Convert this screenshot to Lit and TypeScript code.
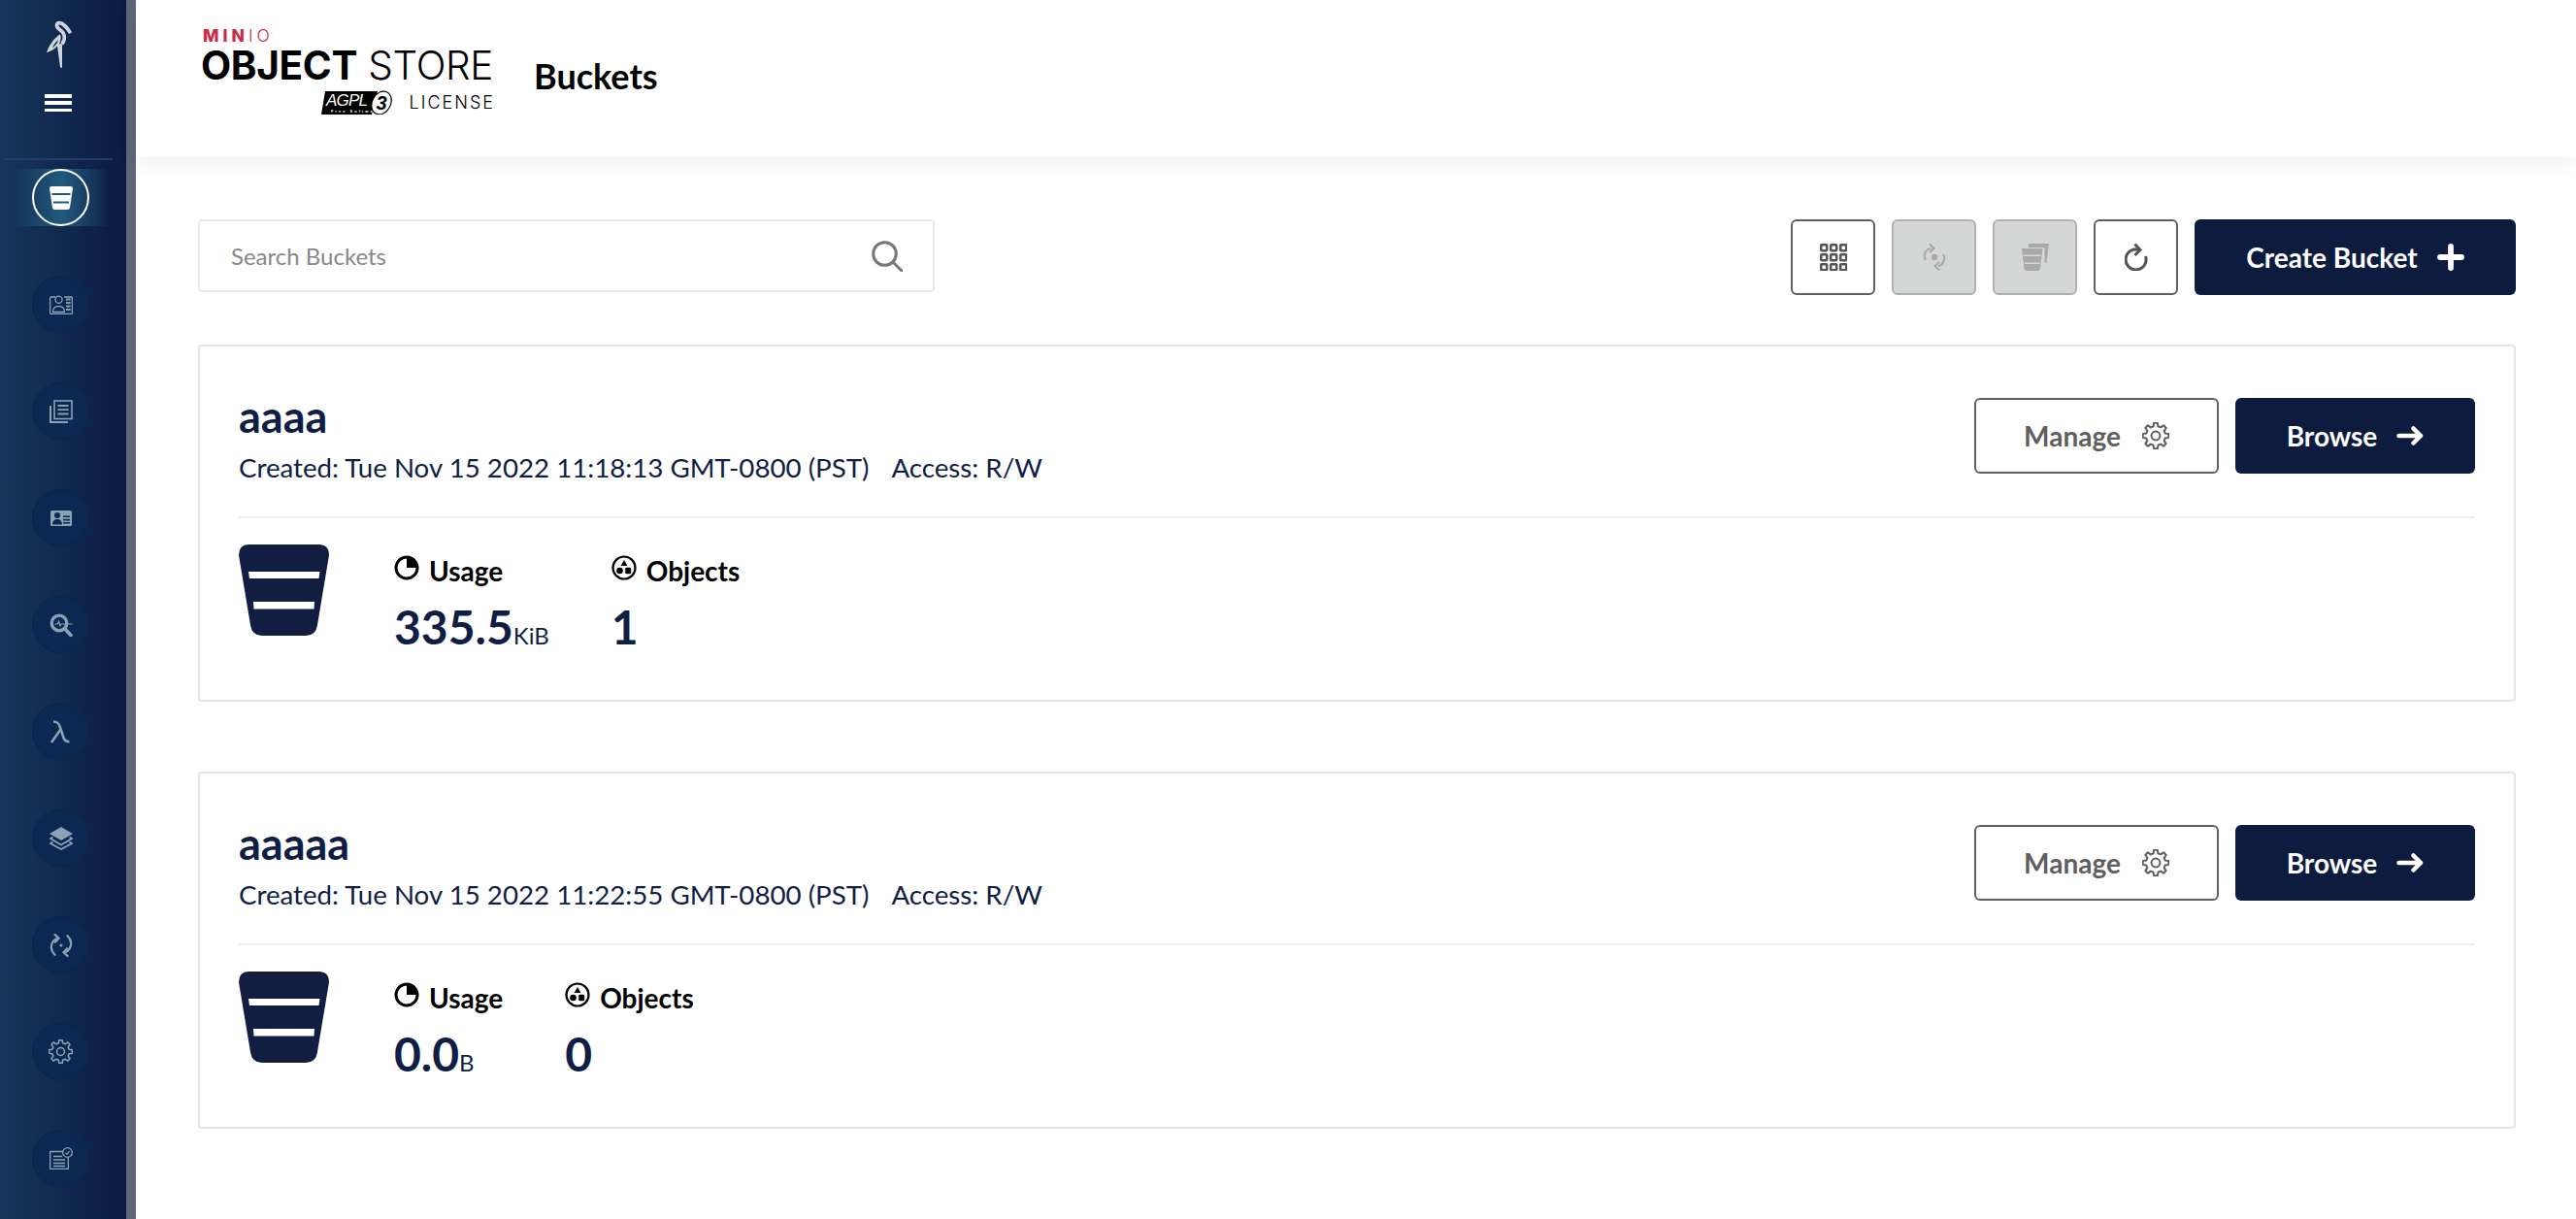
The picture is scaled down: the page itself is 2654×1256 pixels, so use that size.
import { LitElement, html, css, svg } from "lit";
import { customElement } from "lit/decorators.js";

const gearD = (() => {
  const teeth = 8, R = 11.5, r = 8.6, cx = 12, cy = 12;
  let d = "";
  for (let i = 0; i < teeth; i++) {
    const a = (i / teeth) * Math.PI * 2;
    const w = Math.PI / teeth;
    const pts = [
      [r, a - w * 0.62], [R, a - w * 0.36], [R, a + w * 0.36], [r, a + w * 0.62],
    ];
    for (const [rad, t] of pts) {
      d += `${d ? "L" : "M"}${(cx + rad * Math.sin(t)).toFixed(2)} ${(cy - rad * Math.cos(t)).toFixed(2)}`;
    }
  }
  return d + "Z";
})();

const gear = (sw: number) => html`<svg viewBox="0 0 24 24" width="100%" height="100%" fill="none" stroke="currentColor" stroke-width=${sw} stroke-linejoin="round"><path d=${gearD}/><circle cx="12" cy="12" r="3.8"/></svg>`;

const navIcons = [
  html`<svg class="ic" width="24" height="20" viewBox="0 0 24 20" fill="none" stroke="currentColor" stroke-width="1.3"><path d="M6 2H1.6a1 1 0 0 0-1 1v15.4a1 1 0 0 0 1 1h20.8a1 1 0 0 0 1-1V3a1 1 0 0 0-1-1H15"/><circle cx="9.5" cy="4.8" r="3.6"/><path d="M3.5 17.5c0-4 2.6-6 6-6s6 2 6 6z"/><path d="M17 4.5h4.6M17 8h4.6M17 11.5h4.6M17 15h4.6" stroke-width="2"/></svg>`,
  html`<svg class="ic" width="24" height="24" viewBox="0 0 24 24" fill="none" stroke="currentColor" stroke-width="1.6"><rect x="5" y="1" width="18" height="18.5"/><path d="M8.5 6h11M8.5 10.2h11M8.5 14.5h11" stroke-width="1.8"/><path d="M1 6v17h18" stroke-width="2"/></svg>`,
  html`<svg class="ic" width="22" height="16" viewBox="0 0 22 16"><path fill="currentColor" fill-rule="evenodd" d="M1.5 0h19A1.5 1.5 0 0 1 22 1.5v13a1.5 1.5 0 0 1-1.5 1.5h-19A1.5 1.5 0 0 1 0 14.500v-13A1.500 1.500 0 0 1 1.500 0zM7 2a3 3 0 1 0 0 6 3 3 0 0 0 0-6zM2 14.500h10c0-3.500-2-5.500-5-5.500s-5 2-5 5.500zM13 5.500v1.600h7V5.500zM13 8.800v1.600h7V8.800zM13 12v1.600h7V12z"/></svg>`,
  html`<svg class="ic" width="24" height="24" viewBox="0 0 24 24" fill="none" stroke="currentColor"><circle cx="10" cy="10" r="7.800" stroke-width="3.300"/><path d="M15.500 15.500L22 22.500" stroke-width="3.600" stroke-linecap="round"/><path d="M5.500 11h3l1-3 1.500 5 1-2h11.500" stroke-width="1.100"/></svg>`,
  html`<svg class="ic" width="24" height="24" viewBox="0 0 24 24" fill="none" stroke="currentColor" stroke-width="2.600"><path d="M4 1.500c4 0 5.500 1.500 7 6l3.500 10.500c1 3 2.500 4.500 6 4"/><path d="M11.500 9.500L2 23"/></svg>`,
  html`<svg class="ic" width="24" height="24" viewBox="0 0 24 24"><path fill="currentColor" d="M12 0l12 7-12 7L0 7z"/><path fill="none" stroke="currentColor" stroke-width="1.700" d="M3.500 10.500L1 12l11 6.500L23 12l-2.500-1.500"/><path fill="none" stroke="currentColor" stroke-width="1.700" d="M3.500 15.500L1 17l11 6 11-6-2.500-1.500"/></svg>`,
  html`<svg class="ic" width="24" height="24" viewBox="0 0 24 24" fill="none" stroke="currentColor" stroke-width="2.200" stroke-linecap="round"><path d="M9 4.500C2 6.500 -1 15.500 5.500 21.800"/><path d="M15 19.500C22 17.500 25 8.500 18.500 2.200"/><path d="M5.500 1L9.500 4.800 5.800 8.800"/><path d="M18.500 23L14.500 19.200 18.200 15.200"/><circle cx="12" cy="12" r="1.500" fill="currentColor" stroke="none"/></svg>`,
  html`<span class="gear-nav">${gear(1.5)}</span>`,
  html`<svg class="ic" width="24" height="23" viewBox="0 0 24 23" fill="none" stroke="currentColor" stroke-width="1.300"><path d="M14 4.500H.7v18h18.600V11"/><path d="M4 9.500h9M4 13h12M4 16.500h12M4 19.500h12" stroke-width="1.500"/><circle cx="18.500" cy="5.500" r="4.800"/><path d="M16.500 5.700l1.500 1.500 2.600-3" stroke-width="1.100"/></svg>`,
];

const bucketBig = html`<svg class="bucket" width="93" height="94" viewBox="0 0 93 94"><path fill="#111e42" d="M11 0H82Q93 0 93 11L81 83Q79.500 94 69 94H24Q13.500 94 12 83L0 11Q0 0 11 0z"/><path fill="#fff" d="M10 28H83.500L82.500 35H11zM15 59H78L77.500 66.500H15.500z"/></svg>`;

const usageIcon = html`<svg class="si" width="26" height="26" viewBox="0 0 26 26"><circle cx="13" cy="13" r="11" fill="none" stroke="#000" stroke-width="3"/><path d="M13 2a11 11 0 0 1 11 11H13z" fill="#000"/></svg>`;
const objIcon = html`<svg class="si" width="26" height="26" viewBox="0 0 26 26"><circle cx="13" cy="13" r="11.500" fill="none" stroke="#000" stroke-width="2.200"/><path d="M13 5l3.500 6h-7z" fill="#000"/><circle cx="8.500" cy="16" r="3.300" fill="#000"/><rect x="14.200" y="12.800" width="6" height="6.400" rx="1.500" fill="#000"/></svg>`;

const arrow = html`<svg width="28" height="22" viewBox="0 0 28 22" fill="none" stroke="#fff" stroke-width="4.500" stroke-linecap="round" stroke-linejoin="round"><path d="M2.500 11h22.500M17.500 3.500l7.500 7.500-7.500 7.500"/></svg>`;
const plus = html`<svg width="28" height="28" viewBox="0 0 28 28" fill="none" stroke="#fff" stroke-width="5.800" stroke-linecap="round"><path d="M14 3v22M3 14h22"/></svg>`;

const gridIcon = html`<svg width="28" height="28" viewBox="0 0 28 28" fill="none" stroke="#555" stroke-width="2.500">${[0, 10, 20].flatMap((y) => [0, 10, 20].map((x) => svg`<rect x=${x + 1.2} y=${y + 1.2} width="6" height="6" rx=".8"/>`))}</svg>`;
const replIcon = html`<svg width="24" height="28" viewBox="0 0 24 28" fill="none" stroke="#a9a9a9" stroke-width="2.200"><path d="M3 17C0 12 3 6 8 5"/><path d="M7 .5l4.500 4.500L7 9" stroke-width="2.200"/><path d="M21 11c3 5 0 11-5 12"/><path d="M17 27.500L12.500 23l4.500-4"/><circle cx="12" cy="14" r="3.200" fill="#a9a9a9" stroke="none"/></svg>`;
const multiIcon = html`<svg width="28" height="28" viewBox="0 0 28 28"><path fill="#a9a9a9" d="M7 0H28L25.500 20H23.500V4H7z"/><path fill="#a9a9a9" d="M0 5h21.500l-2.500 21Q18.500 28 16.500 28H5q-2 0-2.500-2z"/><path fill="#d5d7d6" d="M1.500 11.500h18.500v1.400H1.500zM3 19.500h15.500v1.400H3z"/></svg>`;
const refreshIcon = html`<svg width="24" height="28" viewBox="0 0 24 28" fill="none" stroke="#555" stroke-width="3"><path d="M15 6.500A10.500 10.500 0 1 0 21.500 13"/><path d="M10.500 .5l5.500 6-5.500 5.500"/></svg>`;
const searchIcon = html`<svg width="32" height="32" viewBox="0 0 32 32" fill="none" stroke="#777" stroke-width="3"><circle cx="13.500" cy="13.500" r="11.800"/><path d="M22 22l9 9" stroke-linecap="round"/></svg>`;

const buckets = [
  { name: "aaaa", created: "Tue Nov 15 2022 11:18:13 GMT-0800 (PST)", usage: "335.5", unit: "KiB", objects: "1" },
  { name: "aaaaa", created: "Tue Nov 15 2022 11:22:55 GMT-0800 (PST)", usage: "0.0", unit: "B", objects: "0" },
];

@customElement("app-root")
export class AppRoot extends LitElement {
  static styles = css`
    :host { display: block; font-family: Lato, "Liberation Sans", sans-serif; }
    * { box-sizing: border-box; }
    .page { display: flex; width: 2654px; height: 1256px; overflow: hidden; background: #fff; }

    .side { width: 140px; flex: none; border-right: 10px solid #5f6678; background: linear-gradient(90deg, #15365a, #0c1a42); display: flex; flex-direction: column; align-items: stretch; padding-top: 22px; }
    .bird { display: block; margin-left: 30px; margin-top: -12px; }
    .burger { width: 28px; height: 18px; margin: 17px 0 0 46px; display: flex; flex-direction: column; justify-content: space-between; }
    .burger i { display: block; height: 3.500px; background: #fff; }
    .rule { height: 2px; margin: 48px 14px 0 4px; background: #1f3f68; }
    .nav { display: flex; flex-direction: column; gap: 51px; padding-top: 9px; }
    .active { height: 59px; margin: 0 17px 0 13px; background: linear-gradient(90deg, transparent, #215a7d 50%, transparent); display: flex; justify-content: center; }
    .active .circle { background: none; border: 2px solid #fff; margin-left: -1px; }
    .circle { width: 59px; height: 59px; border-radius: 50%; background: #0a2851; border: 1px solid #0d2448; display: flex; align-items: center; justify-content: center; color: #8da1b6; }
    .navitem { display: flex; padding-left: 33px; }
    .gear-nav { display: block; width: 25px; height: 25px; }

    .main { flex: 1; min-width: 0; display: flex; flex-direction: column; }
    .top { height: 162px; flex: none; display: flex; align-items: center; background: #fff; box-shadow: 0 4px 22px rgba(0,0,0,.07); position: relative; padding-left: 67px; }
    .logo { width: 303px; align-self: flex-start; display: flex; flex-direction: column; margin-top: 29px; font-family: Inter, sans-serif; color: #000; }
    .minio { color: #c72c48; font-size: 17.500px; line-height: 15px; font-weight: 800; letter-spacing: 4px; margin-left: 2px; }
    .minio b { font-weight: 300; }
    .os { font-size: 40.500px; line-height: 36px; margin-top: 6px; white-space: nowrap; font-weight: 300; letter-spacing: -.350px; }
    .os b { font-weight: 700; }
    .lic { display: flex; align-items: center; justify-content: flex-end; gap: 15px; margin-top: 7px; font-size: 18px; letter-spacing: 2px; font-weight: 300; height: 25px; }
    .title { font-size: 36px; font-weight: 700; color: #000; margin-left: 40px; margin-top: -6px; }

    .content { padding: 64px 62px 0 64px; }
    .bar { display: flex; align-items: flex-start; }
    .search { width: 759px; height: 75px; border: 2px solid #eaeaea; border-radius: 4px; display: flex; align-items: center; justify-content: space-between; padding: 0 31px 0 32px; color: #888; font-size: 24px; }
    .tools { margin-left: auto; display: flex; gap: 17px; }
    .tool { width: 87px; height: 78px; border: 2px solid #5f5f5f; border-radius: 6px; background: #fff; display: flex; align-items: center; justify-content: center; }
    .tool.off { background: #d5d7d6; border-color: #b0b0b0; }
    .btn { height: 78px; border-radius: 6px; display: flex; align-items: center; justify-content: center; font-size: 28px; font-weight: 700; }
    .dark { background: #0d1b3f; color: #fff; }
    .create { width: 331px; gap: 20px; margin-left: 0; }
    .manage { width: 252px; gap: 22px; border: 2px solid #5f5f5f; color: #5f5f5f; background: #fff; }
    .manage span.g { display: block; width: 28px; height: 28px; }
    .browse { width: 247px; gap: 20px; }

    .card { border: 2px solid #e5e5e5; border-radius: 4px; height: 368px; margin-top: 51px; padding: 45px 40px 0 40px; }
    .card + .card { margin-top: 72px; }
    .head { display: flex; justify-content: space-between; align-items: flex-start; height: 132px; padding-bottom: 34px; border-bottom: 2px solid #eee; }
    .acts { display: flex; gap: 17px; margin-top: 8px; }
    .name { font-size: 45px; line-height: 54px; font-weight: 700; color: #101e45; }
    .meta { font-size: 27.700px; line-height: 36px; color: #101e45; margin-top: 8px; display: flex; gap: 23px; white-space: nowrap; }
    .stats { display: flex; padding-top: 27px; }
    .bucket { flex: none; margin-right: 67px; }
    .stat { padding-top: 11px; margin-right: 64px; }
    .lab { display: flex; align-items: center; gap: 10px; font-size: 28px; line-height: 32px; font-weight: 700; color: #000; }
    .si { margin-top: -6px; }
    .val { font-size: 48px; line-height: 56px; font-weight: 700; color: #101e45; margin-top: 14px; white-space: nowrap; }
    .val small { font-size: 24px; font-weight: 400; }
  `;

  private card(b: (typeof buckets)[number]) {
    return html`<section class="card">
      <div class="head">
        <div>
          <div class="name">${b.name}</div>
          <div class="meta"><span>Created: ${b.created}</span><span>Access: R/W</span></div>
        </div>
        <div class="acts">
          <div class="btn manage">Manage <span class="g">${gear(1.7)}</span></div>
          <div class="btn dark browse">Browse ${arrow}</div>
        </div>
      </div>
      <div class="stats">
        ${bucketBig}
        <div class="stat">
          <div class="lab">${usageIcon}Usage</div>
          <div class="val">${b.usage}<small>${b.unit}</small></div>
        </div>
        <div class="stat">
          <div class="lab">${objIcon}Objects</div>
          <div class="val">${b.objects}</div>
        </div>
      </div>
    </section>`;
  }

  render() {
    return html`<div class="page">
      <aside class="side">
        <svg class="bird" width="70" height="70" viewBox="0 0 210 210" fill="none"><path d="M128 72C116 54 106 41 93 41 82 41 83 54 95 62 113 73 112 95 101 106" stroke="#ccd3dc" stroke-width="11"/><path fill="#ccd3dc" d="M54 133C62 108 78 88 96 76 103 96 92 120 54 133zM72 118C80 113 87 106 90 94 81 101 76 109 72 118z" fill-rule="evenodd"/><path fill="#ccd3dc" d="M86 104L96 178 102 180 102 106z"/></svg>
        <div class="burger"><i></i><i></i><i></i></div>
        <div class="rule"></div>
        <nav class="nav">
          <div class="active"><div class="circle">
            <svg width="24" height="24" viewBox="0 0 24 24"><path fill="#fff" d="M2 0H22Q24 0 24 2L21 22Q20.700 24 18.500 24H5.500Q3.300 24 3 22L0 2Q0 0 2 0z"/><path fill="#215a7d" d="M2.500 7H21.500V9H2.500zM4 15.500H20V17.500H4z"/></svg>
          </div></div>
          ${navIcons.map((i) => html`<div class="navitem"><div class="circle">${i}</div></div>`)}
        </nav>
      </aside>
      <div class="main">
        <header class="top">
          <div class="logo">
            <div class="minio">MIN<b>IO</b></div>
            <div class="os"><b>OBJECT</b> STORE</div>
            <div class="lic">
              <svg width="76" height="25" viewBox="0 0 76 25"><path fill="#000" d="M4 1H58L52 25H0z"/><text x="5" y="16" font-family="Liberation Sans" font-style="italic" font-size="17" fill="#fff" textLength="45">AGPL</text><text x="10" y="22.500" font-family="Liberation Sans" font-weight="700" font-size="4" fill="#fff">Free Software</text><ellipse cx="62" cy="13" rx="9.500" ry="12.500" transform="rotate(28 62 13)" fill="#fff" stroke="#000" stroke-width="1.200"/><text x="56.500" y="20" font-family="Liberation Sans" font-style="italic" font-weight="700" font-size="20" fill="#000">3</text></svg>
              <span>LICENSE</span>
            </div>
          </div>
          <div class="title">Buckets</div>
        </header>
        <div class="content">
          <div class="bar">
            <div class="search"><span>Search Buckets</span>${searchIcon}</div>
            <div class="tools">
              <div class="tool">${gridIcon}</div>
              <div class="tool off">${replIcon}</div>
              <div class="tool off">${multiIcon}</div>
              <div class="tool">${refreshIcon}</div>
              <div class="btn dark create">Create Bucket ${plus}</div>
            </div>
          </div>
          ${buckets.map((b) => this.card(b))}
        </div>
      </div>
    </div>`;
  }
}
